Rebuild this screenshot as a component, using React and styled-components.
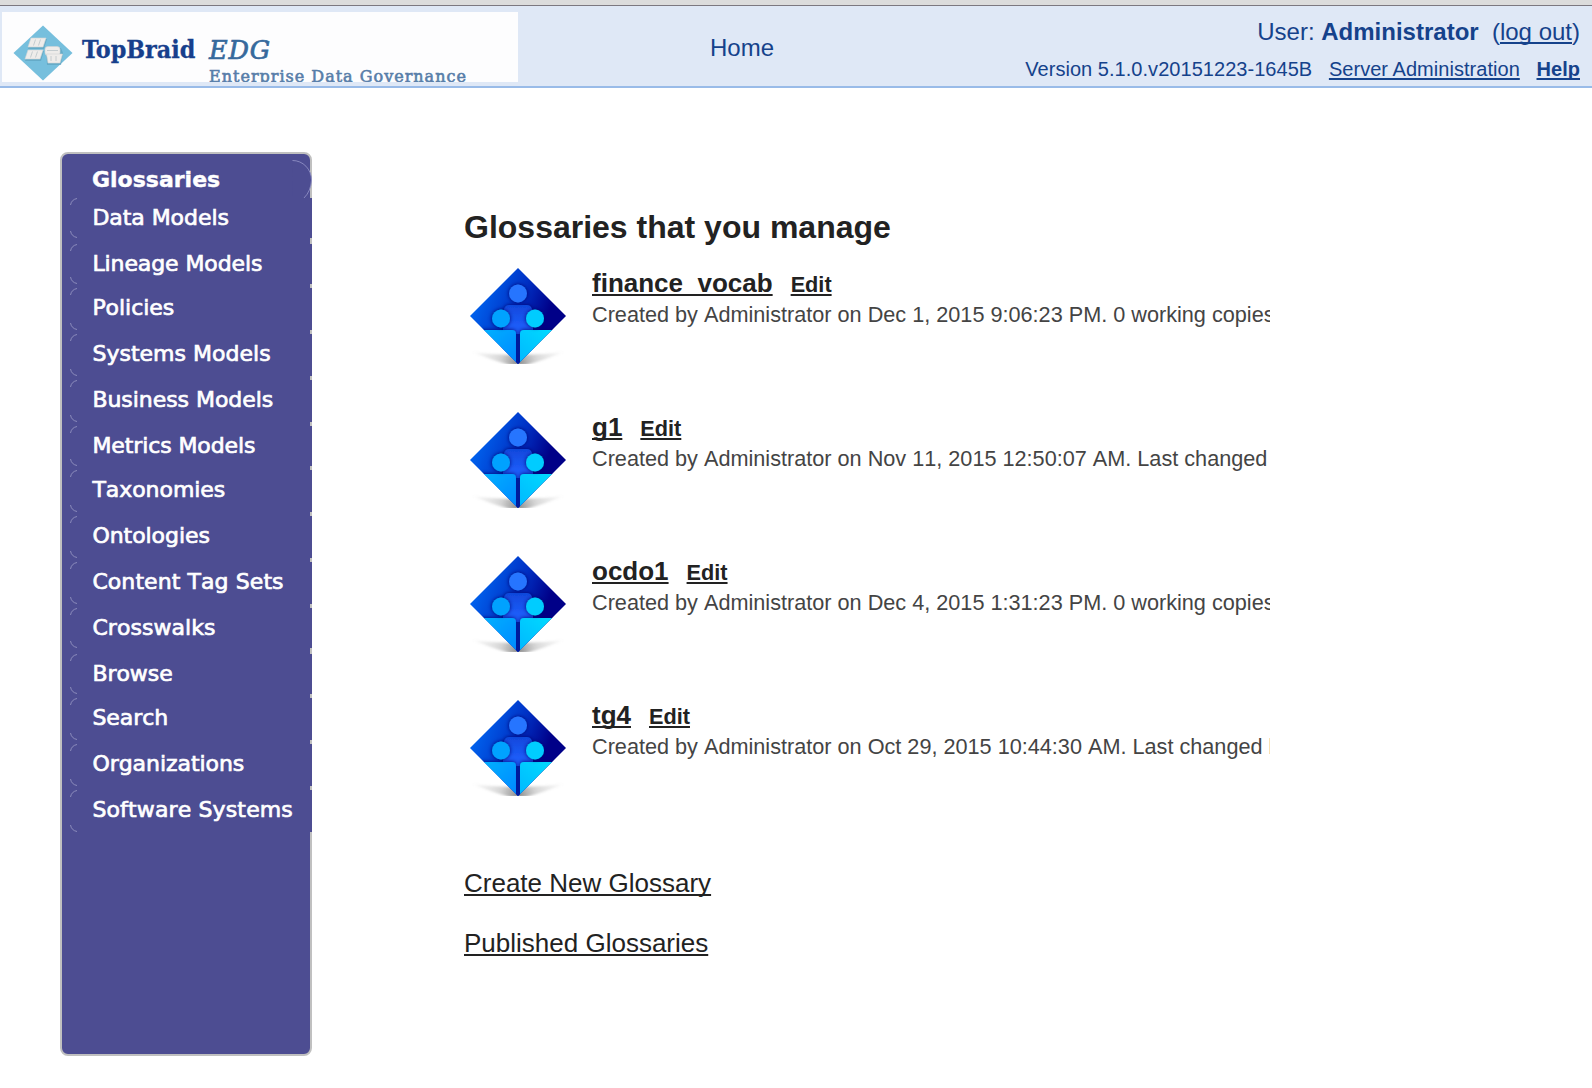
import React from "react";
import styled, { createGlobalStyle } from "styled-components";

const sans = `"Liberation Sans", Arial, sans-serif`;
const wide = `"DejaVu Sans", Verdana, sans-serif`;
const slab = `"DejaVu Serif Condensed", "DejaVu Serif", serif`;

const GlobalStyle = createGlobalStyle`
  body { margin: 0; background: #fff; font-family: ${sans}; }
`;

const Page = styled.div`
  height: 1088px;
  overflow: hidden;
`;

const WindowEdge = styled.div`
  height: 5px;
  background: #dcdcdc;
  border-bottom: 1px solid #7c7880;
`;

const Header = styled.header`
  display: flex;
  align-items: flex-start;
  height: 80px;
  padding-left: 2px;
  background: #dfe8f6;
  border-bottom: 2px solid #99bbe8;
  color: #15428b;
`;

const LogoPanel = styled.div`
  display: flex;
  flex: none;
  width: 505px;
  height: 70px;
  margin-top: 6px;
  padding-left: 11px;
  background: #fdfdfe;
  overflow: hidden;
`;

const LogoMark = styled.svg`
  flex: none;
  width: 60px;
  height: 56px;
  margin-top: 12.5px;
`;

const Brand = styled.span`
  width: 127px;
  margin: 22px 0 0 9px;
  font: bold 24.8px/32px ${slab};
  color: #173f8c;
  -webkit-text-stroke: 0.3px #173f8c;
`;

const Product = styled.div`
  display: flex;
  flex-direction: column;
  margin-top: 22px;
  color: #36699c;
`;

const ProductName = styled.span`
  font: italic 25.5px/32px "DejaVu Serif", serif;
  letter-spacing: 0.8px;
  -webkit-text-stroke: 0.7px #36699c;
`;

const ProductTitle = styled.span`
  margin-top: 1px;
  font: 16px/20px "DejaVu Serif", serif;
  letter-spacing: 1px;
  white-space: nowrap;
  color: #587ea9;
  -webkit-text-stroke: 0.6px #587ea9;
`;

const HomeLink = styled.a`
  margin: 27px 0 0 192px;
  font-size: 24px;
  line-height: 30px;
`;

const Account = styled.div`
  display: flex;
  flex-direction: column;
  align-items: flex-end;
  margin-left: auto;
  padding: 9px 12px 0 0;
`;

const AccountLine = styled.div`
  display: flex;
  gap: ${(p) => p.$gap};
  font-size: ${(p) => p.$size};
  letter-spacing: ${(p) => p.$track || "normal"};
  line-height: 34px;
  height: ${(p) => p.$height};
  white-space: pre;
`;

const Underlined = styled.a`
  text-decoration: underline;
  text-decoration-thickness: 2px;
  text-decoration-skip-ink: none;
  text-underline-offset: 2px;
  font-weight: ${(p) => (p.$bold ? 700 : 400)};
`;

const Body = styled.main`
  display: flex;
  padding: 64px 0 0 60px;
`;

const Sidebar = styled.nav`
  flex: none;
  box-sizing: border-box;
  width: 252px;
  height: 904px;
  border: 2px solid #c0c0c0;
  border-radius: 8px;
  background: #4d4d92;
  color: #fff;
  font-family: ${wide};
`;

const ActiveItem = styled.div`
  display: flex;
  justify-content: space-between;
  height: 38px;
  margin: 6px -2px 0 30px;
  font-size: 22px;
  font-weight: 700;
  line-height: 40px;
  -webkit-text-stroke: 0.4px #fff;
`;

const ActiveCurve = styled.svg`
  flex: none;
  width: 20px;
  height: 38px;
`;

const Item = styled.div`
  display: flex;
  height: ${(p) => p.$height}px;
  margin: 0 -2px ${(p) => p.$gap}px 8px;
  background: #4d4d92;
  font-size: 22px;
  font-kerning: none;
  letter-spacing: ${(p) => p.$track}px;
  line-height: 40px;
  -webkit-text-stroke: 0.7px #fff;
`;

const Corners = styled.div`
  display: flex;
  flex-direction: column;
  justify-content: space-between;
  width: 22.4px;
`;

const Corner = styled.svg`
  width: 8px;
  height: 8px;
  transform: ${(p) => (p.$flip ? "scaleY(-1)" : "none")};
`;

const Content = styled.section`
  width: 806px;
  margin-left: 152px;
  padding-top: 55px;
  overflow: hidden;
  color: #222;
`;

const Title = styled.h1`
  margin: 0 0 21px;
  font-size: 32px;
  line-height: 40px;
`;

const Entry = styled.article`
  display: flex;
  gap: 26px;
  height: 144px;
  padding-left: 6px;
`;

const EntryIcon = styled.svg`
  flex: none;
  width: 96px;
  height: 96px;
`;

const EntryText = styled.div`
  min-width: 0;
  flex: 1;
`;

const EntryHead = styled.div`
  display: flex;
  align-items: baseline;
  gap: 18px;
  font-size: 26px;
  line-height: 30px;
`;

const EditLink = styled(Underlined)`
  font-size: 21.7px;
`;

const Created = styled.p`
  margin: 1px 0 0;
  overflow: hidden;
  font-size: 21.67px;
  font-kerning: none;
  line-height: 28px;
  white-space: nowrap;
  color: #444;
`;

const Actions = styled.div`
  display: flex;
  flex-direction: column;
  align-items: flex-start;
  gap: 30px;
  margin-top: 24px;
  font-size: 26px;
  line-height: 30px;
`;

const items = [
  ["Data Models", 40, 6],
  ["Lineage Models", 40, 4, -0.1],
  ["Policies", 42, 4],
  ["Systems Models", 42, 4, 0.02],
  ["Business Models", 42, 4],
  ["Metrics Models", 40, 4, -0.1],
  ["Taxonomies", 42, 4],
  ["Ontologies", 42, 4],
  ["Content Tag Sets", 42, 4, 0.08],
  ["Crosswalks", 40, 6, 0.05],
  ["Browse", 40, 4],
  ["Search", 42, 4],
  ["Organizations", 42, 4],
  ["Software Systems", 42, 0, 0.14],
];

const glossaries = [
  ["finance_vocab", "Created by Administrator on Dec 1, 2015 9:06:23 PM. 0 working copies"],
  ["g1", "Created by Administrator on Nov 11, 2015 12:50:07 AM. Last changed"],
  ["ocdo1", "Created by Administrator on Dec 4, 2015 1:31:23 PM. 0 working copies"],
  ["tg4", "Created by Administrator on Oct 29, 2015 10:44:30 AM. Last changed by"],
];

function TopBraidMark() {
  return (
    <LogoMark viewBox="0 0 60 56">
      <path d="M30 0.5 L59.5 28 L30 55.5 L0.5 28 Z" fill="#76bfdd" />
      <g fill="#5fa3c0" opacity="0.7">
        <path d="M18 14 h16 l-3 10 h-16 Z" />
        <path d="M15 26 h16 l-3 10 h-16 Z" />
        <path d="M33 23 h15 l2 5 -2 12 h-14 Z" />
      </g>
      <g fill="#eeecea" stroke="#d2d4d4" strokeWidth="0.6">
        <path d="M18 13 h15 l-3 9 h-15 Z" />
        <path d="M15 25 h15 l-3 9 h-15 Z" />
        <rect x="32" y="21.5" width="15" height="9" rx="3" />
        <path d="M33.5 29 h16 l-2.5 9 h-12 Z" />
      </g>
      <path
        d="M22.5 14.5 l-2 6 M27.5 14.5 l-2 6 M19.5 26.5 l-2 6 M24.5 26.5 l-2 6 M38 31 v5 M43 31 v5 M34 25.5 h11"
        stroke="#bfc8cc"
        strokeWidth="0.9"
        fill="none"
      />
    </LogoMark>
  );
}

function GlossaryIcon({ id }) {
  const ref = (name) => `url(#${name}${id})`;
  return (
    <EntryIcon viewBox="0 0 96 96">
      <defs>
        <linearGradient id={`bg${id}`} x1="0.1" y1="0.3" x2="0.85" y2="0.6">
          <stop offset="0" stopColor="#0060ec" />
          <stop offset="0.5" stopColor="#0030c4" />
          <stop offset="0.9" stopColor="#000088" />
        </linearGradient>
        <linearGradient id={`body${id}`} x1="0" y1="0" x2="0" y2="1">
          <stop offset="0" stopColor="#1048dc" />
          <stop offset="0.35" stopColor="#1c5cf8" />
        </linearGradient>
        <linearGradient id={`left${id}`} x1="0" y1="0" x2="1" y2="1">
          <stop offset="0" stopColor="#00b2ff" />
          <stop offset="1" stopColor="#0088ff" />
        </linearGradient>
        <linearGradient id={`right${id}`} x1="0" y1="1" x2="1" y2="0">
          <stop offset="0" stopColor="#00b8ff" />
          <stop offset="1" stopColor="#00dcff" />
        </linearGradient>
        <radialGradient id={`floor${id}`} gradientUnits="userSpaceOnUse" cx="48" cy="95" r="46">
          <stop offset="0" stopColor="#555" stopOpacity="0.7" />
          <stop offset="0.4" stopColor="#888" stopOpacity="0.34" />
          <stop offset="1" stopColor="#aaa" stopOpacity="0.04" />
        </radialGradient>
        <filter id={`soft${id}`} x="-10%" y="-30%" width="120%" height="160%">
          <feGaussianBlur stdDeviation="0.9" />
        </filter>
        <filter id={`glow${id}`} x="-30%" y="-30%" width="160%" height="160%">
          <feDropShadow dx="0" dy="0" stdDeviation="2" floodColor="#000c70" floodOpacity="1" />
        </filter>
        <clipPath id={`clip${id}`}>
          <path d="M48 0 L96 48 L48 96 L0 48 Z" />
        </clipPath>
      </defs>
      <path d="M2 84 Q25 87 48 87 Q71 87 94 84 Q78 91 56 97 H40 Q18 91 2 84 Z" fill={ref("floor")} filter={ref("soft")} />
      <g clipPath={ref("clip")}>
        <rect width="96" height="96" fill={ref("bg")} />
        <path d="M33 45 Q34 37 39 37 H57 Q62 37 63 45 V96 H33 Z" fill={ref("body")} filter={ref("glow")} />
        <circle cx="48" cy="25.5" r="9" fill="#2874ff" filter={ref("glow")} />
        <path d="M10 62 H42 Q46 62 46 66 V96 H10 Z" fill={ref("left")} filter={ref("glow")} />
        <path d="M86 62 H54 Q50 62 50 66 V96 H86 Z" fill={ref("right")} filter={ref("glow")} />
        <path d="M46 66 h4 v30 h-4 Z" fill="#001a9c" />
        <circle cx="31" cy="50.5" r="9" fill="#00a2ff" filter={ref("glow")} />
        <circle cx="65" cy="50.5" r="9" fill="#00ccff" filter={ref("glow")} />
      </g>
    </EntryIcon>
  );
}

function ItemCorner({ flip }) {
  return (
    <Corner $flip={flip} viewBox="0 0 8 8">
      <path d="M0.5 7 Q1.5 1.5 7 0.5" fill="none" stroke="#9c9cc6" strokeWidth="0.8" />
    </Corner>
  );
}

export default function App() {
  return (
    <Page>
      <GlobalStyle />
      <WindowEdge />
      <Header>
        <LogoPanel>
          <TopBraidMark />
          <Brand>TopBraid</Brand>
          <Product>
            <ProductName>EDG</ProductName>
            <ProductTitle>Enterprise Data Governance</ProductTitle>
          </Product>
        </LogoPanel>
        <HomeLink>Home</HomeLink>
        <Account>
          <AccountLine $size="24px" $height="37px" $gap="13.3px">
            <span>
              User: <b>Administrator</b>
            </span>
            <span>
              (<Underlined>log out</Underlined>)
            </span>
          </AccountLine>
          <AccountLine $size="20px" $height="34px" $gap="16.7px" $track="0.04px">
            <span>Version 5.1.0.v20151223-1645B</span>
            <Underlined>Server Administration</Underlined>
            <Underlined $bold>Help</Underlined>
          </AccountLine>
        </Account>
      </Header>
      <Body>
        <Sidebar>
          <ActiveItem>
            Glossaries
            <ActiveCurve viewBox="0 0 20 38">
              <path d="M0.5 0.5 A19 19.5 0 0 1 19.5 20 Q19 31 12 38 H0 Z" fill="#4d4d92" />
              <path d="M0.5 0.5 A19 19.5 0 0 1 19.5 20 Q19 31 12 38" fill="none" stroke="#8f8fc4" strokeWidth="0.9" />
            </ActiveCurve>
          </ActiveItem>
          {items.map(([label, height, gap, track = -0.05]) => (
            <Item key={label} $height={height} $gap={gap} $track={track}>
              <Corners>
                <ItemCorner />
                <ItemCorner flip />
              </Corners>
              {label}
            </Item>
          ))}
        </Sidebar>
        <Content>
          <Title>Glossaries that you manage</Title>
          {glossaries.map(([name, created], i) => (
            <Entry key={name}>
              <GlossaryIcon id={i} />
              <EntryText>
                <EntryHead>
                  <Underlined $bold>{name}</Underlined>
                  <EditLink $bold>Edit</EditLink>
                </EntryHead>
                <Created>{created}</Created>
              </EntryText>
            </Entry>
          ))}
          <Actions>
            <Underlined>Create New Glossary</Underlined>
            <Underlined>Published Glossaries</Underlined>
          </Actions>
        </Content>
      </Body>
    </Page>
  );
}
